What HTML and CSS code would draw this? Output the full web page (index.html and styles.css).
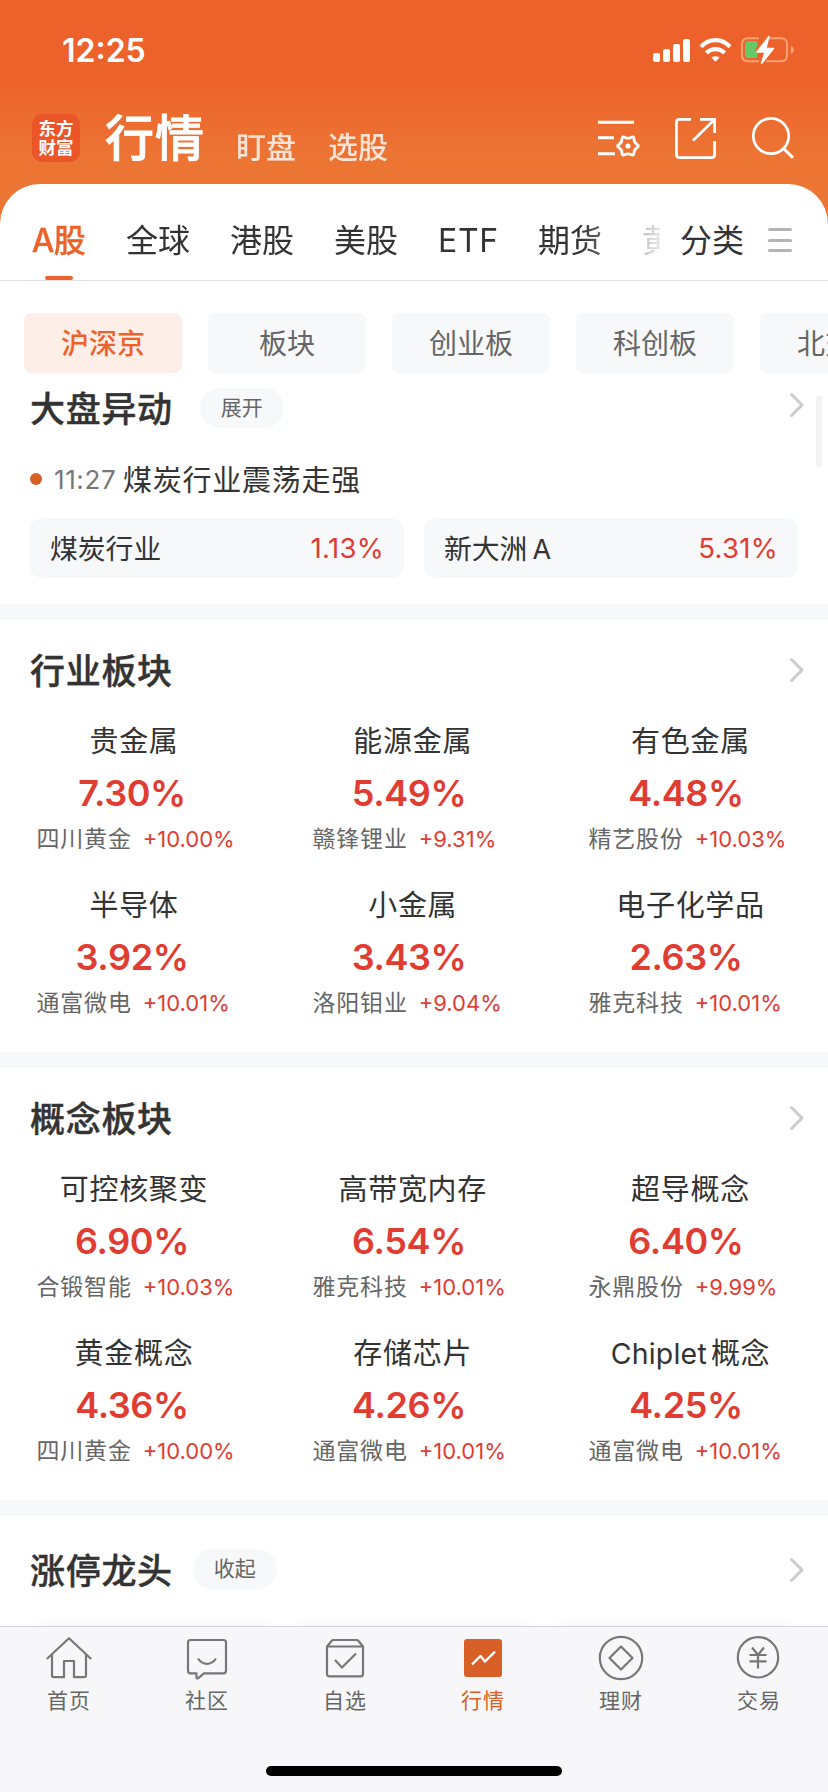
FILE: index.html
```html
<!DOCTYPE html>
<html lang="zh-CN">
<head>
<meta charset="utf-8">
<title>行情</title>
<link rel="stylesheet" href="styles.css">
</head>
<body>
<div class="app">
  <header class="header">
    <div class="status">
      <span class="clock">12:25</span>
      <svg class="status-icons" width="144" height="30" viewBox="0 0 144 30">
        <g fill="#fff">
          <rect x="3" y="18" width="7" height="9" rx="2"/>
          <rect x="13" y="14" width="7" height="13" rx="2"/>
          <rect x="23" y="9" width="7" height="18" rx="2"/>
          <rect x="33" y="4" width="7" height="23" rx="2"/>
          <path d="M65.500 21.200q-2.300 0-4.100 1.300l4.100 4.300 4.100-4.300q-1.800-1.300-4.100-1.300z"/>
        </g>
        <g fill="none" stroke="#fff" stroke-width="4.200">
          <path d="M51 11.800Q57.200 5.200 65.500 5.200T80 11.800"/>
          <path d="M56.500 18Q60.300 14.100 65.500 14.100T74.500 18"/>
        </g>
        <path d="M110 4h-11q-6 0-6 6v11q0 6 6 6h11M119 4h13q6 0 6 6v11q0 6-6 6h-15" transform="translate(-1 -.8)" fill="none" stroke="#f5a276" stroke-width="2"/>
        <path d="M141.300 11q3 1 3 4t-3 4z" fill="#f5a276" transform="translate(-.5 -.2)"/>
        <path d="M98 6h8q1.500 0 1.500 2v3l-2 3.500 1 3 1 1.500v2q0 2-1.500 2h-8q-3 0-3-3V9q0-3 3-3z" fill="#66c766"/>
        <path d="M119.500 1.500 107.500 17h8l-3.500 11.500L124 13.500h-7.700l3.200-12z" transform="translate(-.5 0)" fill="#fff" stroke="#fff" stroke-width="1.400" stroke-linejoin="round"/>
      </svg>
    </div>
    <div class="titlebar">
      <div class="logo"><span>东方</span><span>财富</span></div>
      <h1 class="title">行情</h1>
      <span class="subtitle">盯盘</span>
      <span class="subtitle">选股</span>
      <div class="actions">
        <svg width="44" height="44" viewBox="0 0 44 44" fill="none" stroke="#fff" stroke-width="2.800">
          <path d="M2 6.200h36M2 21.800h16M2 37.800h17" stroke-width="3"/>
          <path transform="translate(32 30)" d="M8.930-1.750Q11.800 0 8.930 1.750Q6.060 3.500 5.980 6.850Q5.900 10.200 2.950 8.600Q0 7-2.950 8.600Q-5.900 10.200-5.980 6.850Q-6.060 3.500-8.930 1.750Q-11.800 0-8.930-1.750Q-6.060-3.500-5.980-6.850Q-5.900-10.200-2.950-8.600Q0-7 2.950-8.600Q5.900-10.200 5.980-6.850Q6.060-3.500 8.930-1.750Z"/>
          <circle cx="32" cy="30" r="2.600" fill="#fff" stroke="none"/>
        </svg>
        <svg width="44" height="44" viewBox="0 0 44 44" fill="none" stroke="#fff" stroke-width="2.800">
          <path d="M18 3.400H6.400q-3 0-3 3v32.200q0 3 3 3h32.200q3 0 3-3V25M27 3.400h14.600V17M40.500 4.500 20 24.500"/>
        </svg>
        <svg width="44" height="44" viewBox="0 0 44 44" fill="none" stroke="#fff" stroke-width="2.700">
          <circle cx="21" cy="20" r="17.700"/><path d="M33.500 32.500 43 41.700" stroke-width="3"/>
        </svg>
      </div>
    </div>
  </header>

  <main class="panel">
    <nav class="markets">
      <div class="market-scroll">
        <span class="market market-on">A股</span>
        <span class="market">全球</span>
        <span class="market">港股</span>
        <span class="market">美股</span>
        <span class="market market-etf">ETF</span>
        <span class="market">期货</span>
        <span class="market">黄</span>
      </div>
      <span class="category">分类</span>
      <div class="burger"><i></i><i></i><i></i></div>
    </nav>

    <div class="chips">
      <span class="chip chip-on">沪深京</span>
      <span class="chip">板块</span>
      <span class="chip">创业板</span>
      <span class="chip">科创板</span>
      <span class="chip">北交所</span>
    </div>

    <section class="moves">
      <div class="head">
        <h2>大盘异动</h2><span class="pill">展开</span>
        <svg class="more" width="16" height="26" viewBox="0 0 16 26"><path d="M2.500 2.500 13 13 2.500 23.500"/></svg>
      </div>
      <div class="event"><i class="dot"></i><time>11:27</time><span>煤炭行业震荡走强</span></div>
      <div class="cards">
        <div class="card"><span>煤炭行业</span><b>1.13%</b></div>
        <div class="card"><span>新大洲<em>A</em></span><b>5.31%</b></div>
      </div>
      <div class="scrollbar"></div>
    </section>

    <section class="board">
      <div class="head">
        <h2>行业板块</h2>
        <svg class="more" width="16" height="26" viewBox="0 0 16 26"><path d="M2.500 2.500 13 13 2.500 23.500"/></svg>
      </div>
      <div class="grid">
        <div class="cell"><div class="name">贵金属</div><div class="pct">7.30%</div><div class="stock">四川黄金<b>+10.00%</b></div></div>
        <div class="cell"><div class="name">能源金属</div><div class="pct">5.49%</div><div class="stock">赣锋锂业<b>+9.31%</b></div></div>
        <div class="cell"><div class="name">有色金属</div><div class="pct">4.48%</div><div class="stock">精艺股份<b>+10.03%</b></div></div>
        <div class="cell"><div class="name">半导体</div><div class="pct">3.92%</div><div class="stock">通富微电<b>+10.01%</b></div></div>
        <div class="cell"><div class="name">小金属</div><div class="pct">3.43%</div><div class="stock">洛阳钼业<b>+9.04%</b></div></div>
        <div class="cell"><div class="name">电子化学品</div><div class="pct">2.63%</div><div class="stock">雅克科技<b>+10.01%</b></div></div>
      </div>
    </section>

    <section class="board">
      <div class="head">
        <h2>概念板块</h2>
        <svg class="more" width="16" height="26" viewBox="0 0 16 26"><path d="M2.500 2.500 13 13 2.500 23.500"/></svg>
      </div>
      <div class="grid">
        <div class="cell"><div class="name">可控核聚变</div><div class="pct">6.90%</div><div class="stock">合锻智能<b>+10.03%</b></div></div>
        <div class="cell"><div class="name">高带宽内存</div><div class="pct">6.54%</div><div class="stock">雅克科技<b>+10.01%</b></div></div>
        <div class="cell"><div class="name">超导概念</div><div class="pct">6.40%</div><div class="stock">永鼎股份<b>+9.99%</b></div></div>
        <div class="cell"><div class="name">黄金概念</div><div class="pct">4.36%</div><div class="stock">四川黄金<b>+10.00%</b></div></div>
        <div class="cell"><div class="name">存储芯片</div><div class="pct">4.26%</div><div class="stock">通富微电<b>+10.01%</b></div></div>
        <div class="cell"><div class="name"><em>Chiplet</em>概念</div><div class="pct">4.25%</div><div class="stock">通富微电<b>+10.01%</b></div></div>
      </div>
    </section>

    <section class="leaders">
      <div class="head">
        <h2>涨停龙头</h2><span class="pill">收起</span>
        <svg class="more" width="16" height="26" viewBox="0 0 16 26"><path d="M2.500 2.500 13 13 2.500 23.500"/></svg>
      </div>
      <div class="leader-cards"><i></i><i></i><i></i></div>
    </section>
  </main>

  <footer class="tabbar">
    <div class="tabs">
      <div class="tab">
        <svg width="48" height="48" viewBox="0 0 48 48"><path d="M1.800 25 24 4.300 46.200 25M7 20.500v21q0 1.700 1.700 1.700H19V27h10v16.200h10.300q1.700 0 1.700-1.700v-21"/></svg>
        <span>首页</span>
      </div>
      <div class="tab">
        <svg width="48" height="48" viewBox="0 0 48 48"><path d="M7.500 6h33q2.500 0 2.500 2.500v28.300q0 2.500-2.500 2.500H21l-6 5q-1.500.7-1.500-1v-4h-6q-2.500 0-2.500-2.500V8.500Q5 6 7.500 6zM15 24.500q3.500 5.300 9 5.300t9-5.300"/></svg>
        <span>社区</span>
      </div>
      <div class="tab">
        <svg width="48" height="48" viewBox="0 0 48 48"><path d="M6 12.500 10.500 7q.8-1 2-1h23q1.200 0 2 1l4.500 5.500V40q0 2.300-2.300 2.300H8.300Q6 42.300 6 40zM6 12.500h36M14 26l7 7.500 14-14"/></svg>
        <span>自选</span>
      </div>
      <div class="tab tab-on">
        <svg width="48" height="48" viewBox="0 0 48 48"><rect x="5" y="5" width="38" height="38" rx="3" fill="#d85f26" stroke="none"/><path d="M13 30.500 21.500 22l4.500 5.500 10-9.800" stroke="#fff" stroke-width="2.400"/></svg>
        <span>行情</span>
      </div>
      <div class="tab">
        <svg width="48" height="48" viewBox="0 0 48 48"><circle cx="24" cy="24" r="21.200"/><path d="M24 12.500 35.500 24 24 35.500 12.500 24z"/></svg>
        <span>理财</span>
      </div>
      <div class="tab">
        <svg width="48" height="48" viewBox="0 0 48 48"><circle cx="23" cy="23.300" r="20.200"/><path d="m17 13.500 6 7.500 6-7.500M14.500 21h17M14.500 27.300h17M23 21v13.500"/></svg>
        <span>交易</span>
      </div>
    </div>
    <div class="home-bar"></div>
  </footer>
</div>
</body>
</html>
```
FILE: styles.css
```css
* { box-sizing: border-box; }

body {
  margin: 0;
  background: #fff;
  color: #333;
  font-family: Inter, "Noto Sans CJK SC", sans-serif;
}

h1, h2 { margin: 0; font-weight: 500; }
b { font-weight: 400; }
em, i { font-style: normal; }
svg { display: block; }

.app {
  width: 828px;
  height: 1792px;
  display: flex;
  flex-direction: column;
  overflow: hidden;
  background: linear-gradient(#ec622a 0, #ec632a 78px, #ec7534 160px, #ec7534 230px) no-repeat;
  background-size: 100% 230px;
}

/* Header */
.header { height: 184px; flex: none; color: #fff; }

.status {
  height: 98px;
  padding: 0 34px 0 62px;
  display: flex;
  justify-content: space-between;
  align-items: center;
}
.clock { font-size: 32px; font-weight: 600; line-height: 40px; padding-top: 4px; }
.status-icons { margin-top: 1px; overflow: visible; }

.titlebar { display: flex; height: 80px; padding: 0 32px; align-items: center; }
.logo {
  width: 48px;
  height: 48px;
  border-radius: 10px;
  background: #ec5528;
  display: flex;
  flex-direction: column;
  align-items: center;
  justify-content: center;
  font-size: 17.5px;
  font-weight: 700;
  line-height: 19.5px;
}
.title { margin: 2px 0 0 25px; font-size: 49px; line-height: 60px; letter-spacing: 1px; -webkit-text-stroke: .8px #fff; }
.subtitle { margin: 18px 0 0 32px; font-size: 30px; line-height: 40px; font-weight: 500; opacity: .8; }
.title + .subtitle { margin-left: 31px; }
.actions { margin-left: auto; display: flex; gap: 33px; margin-right: 2px; }

/* Market tabs */
.panel { flex: 1; min-height: 0; background: #fff; border-radius: 40px 40px 0 0; overflow: hidden; }
.markets {
  height: 97px;
  border-bottom: 1px solid #e2e2e2;
  display: flex;
  align-items: flex-start;
  font-size: 32px;
}
.market-scroll {
  width: 660px;
  height: 96px;
  padding-left: 32px;
  display: flex;
  gap: 40px;
  overflow: hidden;
  white-space: nowrap;
  -webkit-mask-image: linear-gradient(90deg, #000 580px, rgba(0,0,0,.12) 660px);
  mask-image: linear-gradient(90deg, #000 580px, rgba(0,0,0,.12) 660px);
}
.market { flex: none; line-height: 114px; height: 96px; }
.market-on { width: 54px; color: #ec622a; font-weight: 500; letter-spacing: -.5px; text-indent: -1px; display: flex; flex-direction: column; align-items: center; -webkit-text-stroke: .3px #ec622a; }
.market-on::after { content: ""; width: 28px; height: 4px; margin-top: -22px; border-radius: 2px; background: #ec622a; }
.market-etf { width: 60px; text-align: center; font-size: 32px; letter-spacing: .6px; }
.category { margin-left: 20px; line-height: 114px; }
.burger { margin: 44px 0 0 24px; width: 24px; height: 24px; display: flex; flex-direction: column; justify-content: space-between; }
.burger i { height: 3px; border-radius: 1.500px; background: #b3b3b3; }

/* Chips */
.chips { height: 92px; padding: 32px 0 0 24px; display: flex; gap: 26px; overflow: hidden; }
.chip {
  flex: none;
  width: 158px;
  height: 60px;
  border-radius: 8px;
  background: #f7f8fa;
  color: #666;
  font-size: 28px;
  line-height: 62px;
  text-align: center;
}
.chip-on { background: #fdeee7; color: #ec622a; font-weight: 500; }

/* Section heads */
.head { display: flex; align-items: center; height: 44px; padding: 0 23px 0 30px; }
.head h2 { font-size: 35px; line-height: 44px; letter-spacing: .7px; -webkit-text-stroke: .4px #333; }
.pill {
  width: 84px;
  height: 40px;
  border-radius: 20px;
  background: #f7f8fa;
  color: #666;
  font-size: 21px;
  line-height: 40px;
  text-align: center;
}
.more { margin-left: auto; fill: none; stroke: #ccc; stroke-width: 3; stroke-linecap: round; stroke-linejoin: round; }

/* Market moves */
.moves { position: relative; height: 247px; padding-top: 13px; border-bottom: 16px solid #f7f8fa; }
.moves h2 { margin-top: 2px; }
.moves .pill { margin-left: 27px; }
.moves .more { margin-top: -6px; }
.event { display: flex; align-items: center; height: 40px; margin: 29px 0 0 30px; font-size: 29px; letter-spacing: .75px; }
.event span { margin-top: -2px; }
.dot { width: 12px; height: 12px; border-radius: 50%; background: #d85f26; }
.event time { width: 61px; margin: 1px 8px 0 12px; font-size: 26px; letter-spacing: .6px; color: #777; white-space: nowrap; }
.cards { display: flex; gap: 20px; margin: 19px 30px 0; }
.card {
  flex: 1;
  height: 60px;
  padding: 0 20px;
  border-radius: 12px;
  background: #f7f8fa;
  display: flex;
  justify-content: space-between;
  font-size: 27.800px;
  line-height: 62px;
}
.card em { margin-left: 5px; font-size: 27px; }
.card b, .pct, .stock b { color: #e03c32; }
.card b { font-size: 27.500px; letter-spacing: .3px; line-height: 61px; }
.scrollbar { position: absolute; top: 22px; right: 6px; width: 6px; height: 72px; border-radius: 3px; background: #f3f3f3; }

/* Sector boards */
.board { height: 448px; padding-top: 29px; border-bottom: 16px solid #f7f8fa; }
.board .more { margin-top: -2px; }
.grid { display: grid; grid-template-columns: repeat(3, 276px); grid-auto-rows: 164px; padding-top: 28px; }
.name { width: 268px; height: 40px; line-height: 42px; font-size: 29px; letter-spacing: .7px; text-align: center; white-space: nowrap; }
.name em { font-size: 28.500px; letter-spacing: .2px; margin-right: 4px; }
.pct { width: 264px; height: 44px; margin-top: 10px; line-height: 44px; font-size: 36px; font-weight: 600; letter-spacing: -.4px; text-align: center; }
.stock { display: flex; padding-left: 36.500px; margin-top: 9px; height: 30px; line-height: 30px; font-size: 23px; letter-spacing: .8px; color: #666; }
.stock b { margin-left: 11px; font-size: 22px; letter-spacing: 0; }
.cell:nth-child(3n+2) .name { width: 273.500px; }
.cell:nth-child(3n) .name { width: 277px; }
.cell:nth-child(3n+2) .pct { width: 266px; }
.cell:nth-child(3n) .pct { width: 268px; }

/* Limit-up leaders */
.leaders { padding-top: 33px; }
.leaders .pill { margin: -4px 0 0 20px; }
.leaders .more { margin-top: -2px; }
.leader-cards { display: flex; gap: 28px; padding: 0 38px; margin-top: 35px; }
.leader-cards i { flex: 1; height: 60px; border-radius: 10px; box-shadow: 0 0 16px rgba(0,0,0,.09); }

/* Bottom tab bar */
.tabbar { position: relative; height: 166px; flex: none; background: #f7f7fa; border-top: 1px solid #d4d3dc; }
.tabs { display: grid; grid-template-columns: repeat(6, 138px); padding-top: 7px; }
.tab { display: flex; flex-direction: column; align-items: center; color: #666; font-size: 21px; letter-spacing: 1px; }
.tab svg { fill: none; stroke: #777; stroke-width: 2.200; stroke-linejoin: round; }
.tab span { margin-top: 5px; line-height: 28px; }
.tab-on { color: #d85f26; }
.home-bar { width: 296px; height: 10px; margin: 51px auto 0; border-radius: 5px; background: #000; }
```
